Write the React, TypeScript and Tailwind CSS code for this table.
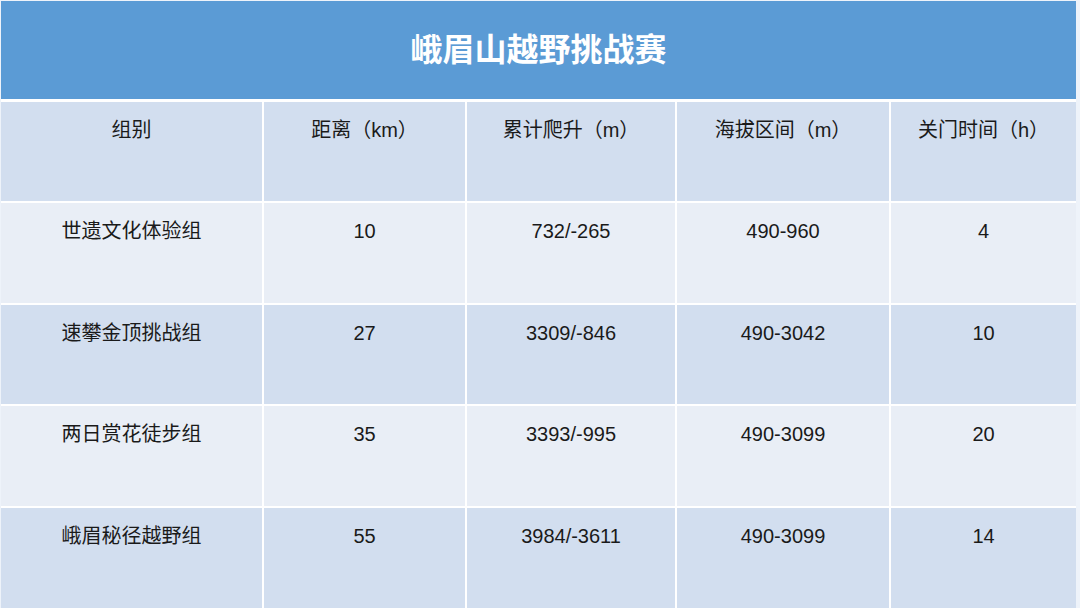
import React from "react";

const rows = [
  ["世遗文化体验组", "10", "732/-265", "490-960", "4"],
  ["速攀金顶挑战组", "27", "3309/-846", "490-3042", "10"],
  ["两日赏花徒步组", "35", "3393/-995", "490-3099", "20"],
  ["峨眉秘径越野组", "55", "3984/-3611", "490-3099", "14"],
];

const headers = ["组别", "距离（km）", "累计爬升（m）", "海拔区间（m）", "关门时间（h）"];

export default function App() {
  return (
    <div
      className="w-[1080px] h-[608px] bg-[#eef3fa] pt-[1px] pl-[1px] pr-[4px] flex flex-col overflow-hidden"
      style={{ fontFamily: '"Liberation Sans", "Noto Sans CJK SC", sans-serif' }}
    >
      <div className="h-[98px] bg-[#5b9bd5] flex items-center justify-center">
        <span className="text-white text-[32px] font-bold leading-none">峨眉山越野挑战赛</span>
      </div>
      <div className="h-[3px] bg-white" />
      <div className="flex-1 bg-white grid grid-cols-[261px_201px_208px_212px_1fr] grid-rows-[99px_100px_99px_100px_100px] gap-[2px]">
        {headers.map((h, i) => (
          <div
            key={"h" + i}
            className="bg-[#d2deef] flex justify-center pt-[16px] text-[20px] leading-[24px] text-[#1a1a1a]"
          >
            {h}
          </div>
        ))}
        {rows.map((r, ri) =>
          r.map((c, ci) => (
            <div
              key={ri + "-" + ci}
              className={`${ri % 2 === 0 ? "bg-[#e9eef6]" : "bg-[#d2deef]"} flex justify-center pt-[16px] text-[20px] leading-[24px] text-[#1a1a1a]`}
            >
              {c}
            </div>
          ))
        )}
      </div>
    </div>
  );
}
